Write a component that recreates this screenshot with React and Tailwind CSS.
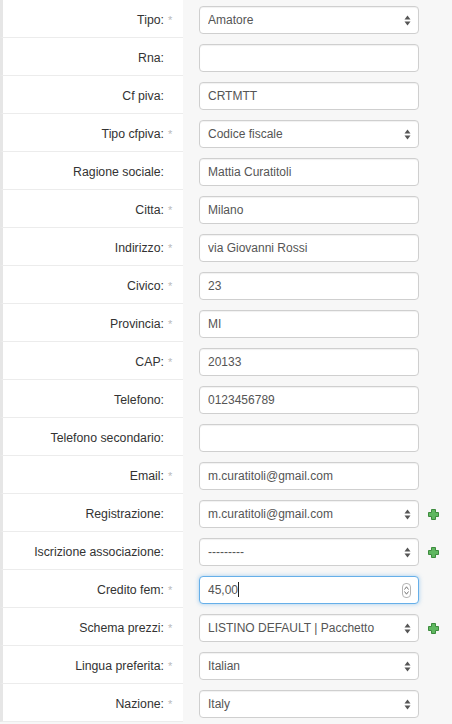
import React from 'react';

const ROWS = [
  { label: 'Tipo:', req: true, type: 'select', value: 'Amatore' },
  { label: 'Rna:', type: 'input', value: '' },
  { label: 'Cf piva:', type: 'input', value: 'CRTMTT' },
  { label: 'Tipo cfpiva:', req: true, type: 'select', value: 'Codice fiscale' },
  { label: 'Ragione sociale:', type: 'input', value: 'Mattia Curatitoli' },
  { label: 'Citta:', req: true, type: 'input', value: 'Milano' },
  { label: 'Indirizzo:', req: true, type: 'input', value: 'via Giovanni Rossi' },
  { label: 'Civico:', req: true, type: 'input', value: '23' },
  { label: 'Provincia:', req: true, type: 'input', value: 'MI' },
  { label: 'CAP:', req: true, type: 'input', value: '20133' },
  { label: 'Telefono:', type: 'input', value: '0123456789' },
  { label: 'Telefono secondario:', type: 'input', value: '' },
  { label: 'Email:', req: true, type: 'input', value: 'm.curatitoli@gmail.com' },
  { label: 'Registrazione:', type: 'select', value: 'm.curatitoli@gmail.com', add: true },
  { label: 'Iscrizione associazione:', type: 'select', value: '---------', add: true },
  { label: 'Credito fem:', req: true, type: 'number', value: '45,00' },
  { label: 'Schema prezzi:', req: true, type: 'select', value: 'LISTINO DEFAULT | Pacchetto', add: true },
  { label: 'Lingua preferita:', req: true, type: 'select', value: 'Italian' },
  { label: 'Nazione:', req: true, type: 'select', value: 'Italy' },
];

function SelectArrows() {
  return (
    <svg width="7" height="11" viewBox="0 0 7 11" className="shrink-0">
      <path d="M3.5 0.5 L6.5 4.5 H0.5 Z" fill="#555" />
      <path d="M3.5 10.5 L6.5 6.5 H0.5 Z" fill="#555" />
    </svg>
  );
}

function Spinner() {
  return (
    <div className="w-[9px] h-[15px] rounded-[4px] border border-[#b5b5b5] flex flex-col items-center justify-center gap-[1px]">
      <svg width="5" height="4" viewBox="0 0 5 4"><path d="M0.5 3.5 L2.5 0.8 L4.5 3.5" stroke="#666" fill="none" strokeWidth="0.9" /></svg>
      <svg width="5" height="4" viewBox="0 0 5 4"><path d="M0.5 0.5 L2.5 3.2 L4.5 0.5" stroke="#666" fill="none" strokeWidth="0.9" /></svg>
    </div>
  );
}

function PlusIcon() {
  return (
    <svg width="11" height="11" viewBox="0 0 11 11" className="shrink-0">
      <path d="M3.5 0.5 H7.5 V3.5 H10.5 V7.5 H7.5 V10.5 H3.5 V7.5 H0.5 V3.5 H3.5 Z" fill="#5fb760" stroke="#3d8b3e" strokeWidth="1" />
    </svg>
  );
}

function Field({ row }) {
  const focused = row.type === 'number';
  return (
    <div
      className={
        'w-[220px] h-[28px] rounded-[4px] bg-white flex items-center pl-[8px] pr-[7px] text-[12px] text-[#555] border ' +
        (focused
          ? 'border-[#66afe9] shadow-[0_0_4px_rgba(102,175,233,0.6)]'
          : 'border-[#cfcfcf] shadow-[inset_0_1px_1px_rgba(0,0,0,0.06)]')
      }
    >
      <span className="flex-1 truncate">
        {row.value}
        {focused && <span className="inline-block w-px h-[15px] bg-[#222] align-middle -mt-[2px]" />}
      </span>
      {row.type === 'select' && <SelectArrows />}
      {focused && <Spinner />}
    </div>
  );
}

export default function App() {
  return (
    <div className="w-[452px] h-[724px] bg-[#f7f7f7] overflow-hidden" style={{ fontFamily: '"Liberation Sans", Arial, sans-serif' }}>
      {ROWS.map((row, i) => (
        <div key={i} className="flex h-[38px]">
          <div className="w-[183px] shrink-0 bg-white border-l-[3px] border-l-[#e6e6e6] border-b border-b-[#ececec] flex items-center justify-end pt-[4px]">
            <span className="text-[12.3px] text-[#333]">{row.label}</span>
            <span className="w-[19px] pl-[4px] text-[11px] text-[#bbb] self-center">{row.req ? '*' : ''}</span>
          </div>
          <div className="flex-1 flex items-start pt-[6px] pl-[16px] gap-[8px]">
            <Field row={row} />
            {row.add && <div className="h-[28px] flex items-center pl-[1px]"><PlusIcon /></div>}
          </div>
        </div>
      ))}
    </div>
  );
}
